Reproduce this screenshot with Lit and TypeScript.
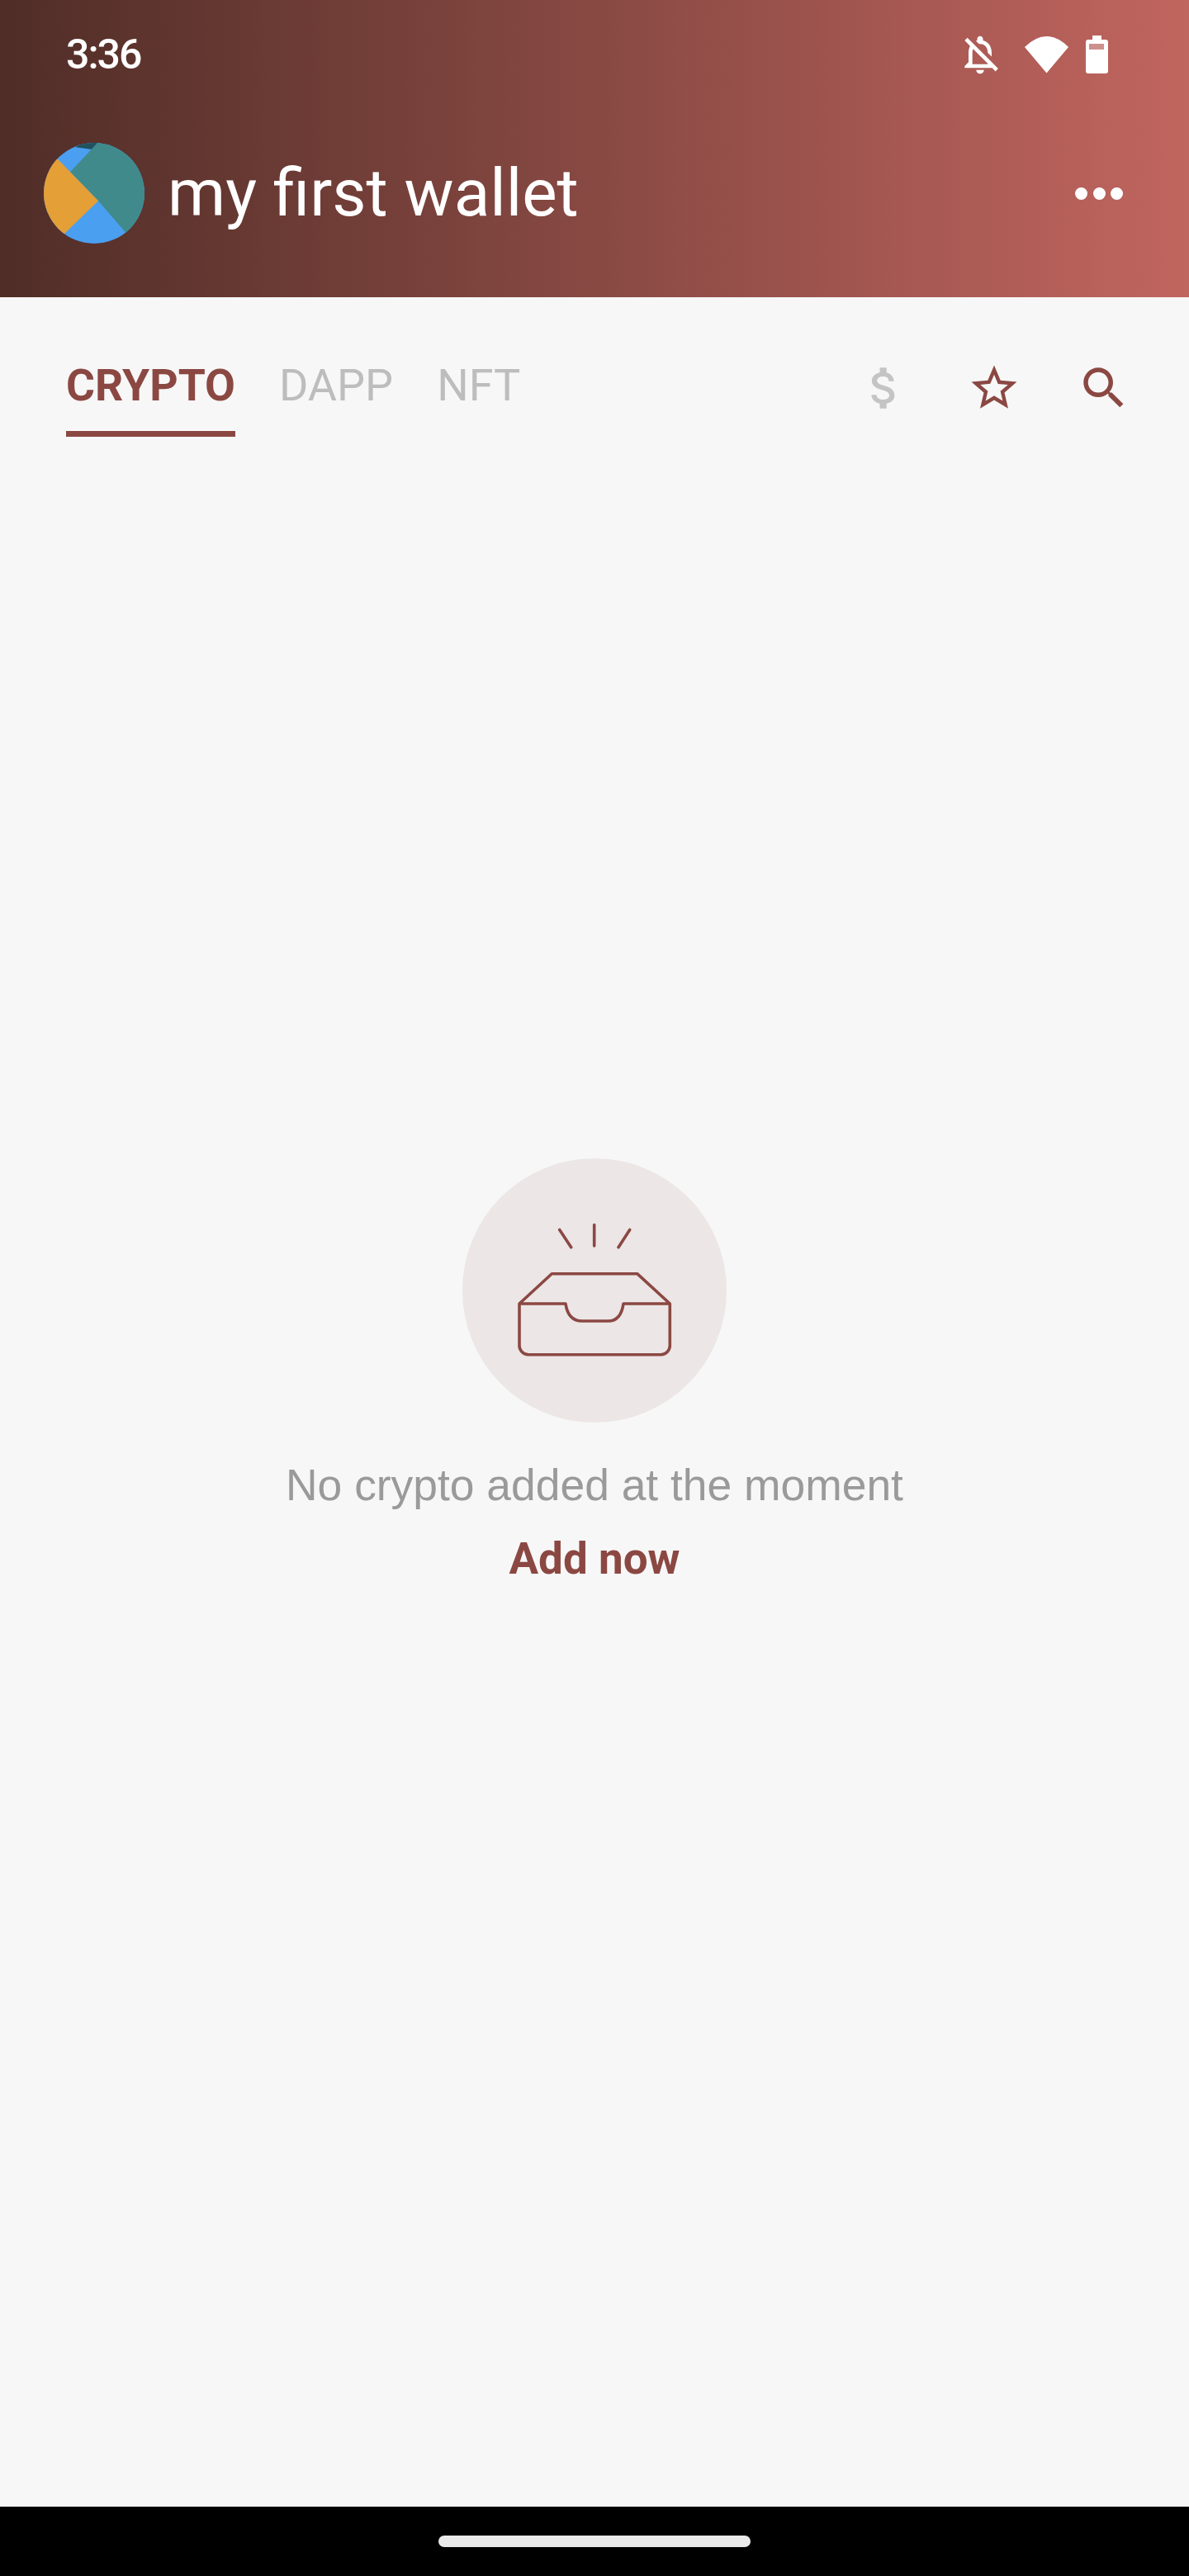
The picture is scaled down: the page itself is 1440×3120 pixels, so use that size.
import {LitElement, html, css, svg} from 'lit';
import {customElement, state} from 'lit/decorators.js';

const BELL_OFF = 'M12 22c1.1 0 2-.9 2-2h-4c0 1.1.9 2 2 2zm0-15.5c2.49 0 4 2.02 4 4.5v.1l2 2V11c0-3.08-1.64-5.64-4.5-6.32V4c0-.83-.67-1.5-1.5-1.5s-1.5.67-1.5 1.5v.68c-.24.06-.47.15-.69.23l1.64 1.64c.18-.02.36-.05.55-.05zM5.41 3.35L4 4.76l2.81 2.81C6.29 8.57 6 9.74 6 11v5l-2 2v1h14.24l1.74 1.74 1.41-1.41L5.41 3.35zM16 17H8v-6c0-.68.12-1.32.34-1.9L16 16.76V17z';
const DOLLAR = 'M11.8 10.9c-2.27-.59-3-1.2-3-2.15 0-1.09 1.01-1.85 2.7-1.85 1.78 0 2.44.85 2.5 2.1h2.21c-.07-1.72-1.12-3.3-3.21-3.81V3h-3v2.16c-1.94.42-3.5 1.68-3.5 3.61 0 2.31 1.91 3.46 4.7 4.13 2.5.6 3 1.48 3 2.41 0 .69-.49 1.79-2.7 1.79-2.06 0-2.87-.92-2.98-2.1h-2.2c.12 2.19 1.76 3.42 3.68 3.83V21h3v-2.15c1.95-.37 3.5-1.5 3.5-3.55 0-2.84-2.43-3.81-4.7-4.4z';
const STAR = 'M22 9.24l-7.19-.62L12 2 9.19 8.63 2 9.24l5.46 4.73L5.82 21 12 17.27 18.18 21l-1.63-7.03L22 9.24zM12 15.4l-3.76 2.27 1-4.28-3.32-2.88 4.38-.38L12 6.1l1.71 4.04 4.38.38-3.32 2.88 1 4.28L12 15.4z';
const SEARCH = 'M15.5 14h-.79l-.28-.27C15.41 12.59 16 11.11 16 9.5 16 5.91 13.09 3 9.5 3S3 5.91 3 9.5 5.91 16 9.5 16c1.61 0 3.09-.59 4.23-1.57l.27.28v.79l5 4.99L20.49 19l-4.99-5zm-6 0C7.01 14 5 11.99 5 9.5S7.01 5 9.5 5 14 7.01 14 9.5 11.99 14 9.5 14z';

const icon = (d: string, cls: string) => html`
  <svg class=${cls} viewBox="0 0 24 24" fill="currentColor">${svg`<path d=${d}></path>`}</svg>
`;

@customElement('app-root')
export class AppRoot extends LitElement {
  @state() private tabs = ['CRYPTO', 'DAPP', 'NFT'];
  @state() private activeTab = 0;

  static styles = css`
    :host {
      display: flex;
      flex-direction: column;
      width: 1440px;
      height: 3120px;
      overflow: hidden;
      background: #f7f7f7;
      font-family: Roboto, sans-serif;
    }

    .header {
      height: 360px;
      flex: none;
      color: #fff;
      background: linear-gradient(to right, #502d27, #c1655f);
    }

    .status {
      display: flex;
      align-items: center;
      height: 56px;
      padding: 38px 98px 0 80px;
    }

    .time {
      font-size: 50px;
      font-weight: 500;
      letter-spacing: -2px;
      line-height: 56px;
    }

    .status-icons {
      display: flex;
      align-items: center;
      margin-left: auto;
    }

    .bell {
      width: 56px;
      height: 56px;
    }

    .wifi {
      width: 53px;
      height: 45px;
      margin-left: 26px;
    }

    .battery {
      width: 27px;
      height: 46px;
      margin-left: 21px;
    }

    .title-row {
      display: flex;
      align-items: center;
      margin-top: 79px;
      padding: 0 80px 0 53px;
    }

    .logo {
      width: 122px;
      height: 122px;
      flex: none;
    }

    .wallet-name {
      margin-left: 28px;
      font-size: 80px;
      line-height: 92px;
      font-weight: 400;
    }

    .more {
      display: flex;
      gap: 6.5px;
      margin-left: auto;
    }

    .more span {
      width: 15px;
      height: 15px;
      border-radius: 50%;
      background: #fff;
    }

    .tabs-row {
      display: flex;
      align-items: flex-start;
      padding: 77px 70px 0 80px;
    }

    .tabs {
      display: flex;
      gap: 53px;
    }

    .tab {
      font-size: 54px;
      line-height: 60px;
      font-weight: 400;
      color: #bdbdbd;
      padding-bottom: 25px;
      border-bottom: 7px solid transparent;
    }

    .tab.active {
      font-size: 53.5px;
      font-weight: 700;
      color: #8b4843;
      border-bottom-color: #8b4843;
    }

    .tools {
      display: flex;
      gap: 67px;
      margin-left: auto;
    }

    .tool {
      width: 66px;
      height: 66px;
      color: #8b4843;
    }

    .tool.muted {
      color: #c4c4c4;
    }

    .empty {
      display: flex;
      flex-direction: column;
      align-items: center;
      margin-top: 874px;
    }

    .tray {
      width: 320px;
      height: 320px;
      border-radius: 50%;
      background: #ece6e6;
    }

    .tray svg {
      display: block;
      fill: none;
      stroke: #8b4843;
      stroke-width: 3.6;
      stroke-linecap: round;
      stroke-linejoin: round;
    }

    .message {
      margin-top: 45px;
      font-family: 'Liberation Sans', Arial, sans-serif;
      font-size: 53.4px;
      line-height: 62px;
      color: #9a9a9a;
    }

    .add {
      margin-top: 28px;
      font-size: 53px;
      line-height: 60px;
      font-weight: 700;
      color: #8b4843;
    }

    .nav {
      display: flex;
      align-items: center;
      justify-content: center;
      height: 84px;
      margin-top: auto;
      background: #000;
    }

    .nav span {
      width: 378px;
      height: 14px;
      border-radius: 7px;
      background: #eaeaea;
    }
  `;

  private renderLogo() {
    return html`
      <svg class="logo" viewBox="0 0 122 122">
        <defs>
          <clipPath id="logo-clip"><circle cx="61" cy="61" r="61"></circle></clipPath>
        </defs>
        <g clip-path="url(#logo-clip)">
          <rect width="122" height="122" fill="#4a9ff0"></rect>
          <polygon points="38.7,5.3 50,-4 66,-4 64.3,1 58,8" fill="#20535f"></polygon>
          <polygon points="64.3,1 70,-6 130,-6 130,130 112,122 99.3,108.7 66,70.3 32,35.3" fill="#408a8c"></polygon>
          <polygon points="17,19.7 66,70.3 24.7,110.3 -6,110 -6,20" fill="#e59f37"></polygon>
        </g>
      </svg>
    `;
  }

  render() {
    return html`
      <div class="header">
        <div class="status">
          <span class="time">3:36</span>
          <div class="status-icons">
            ${icon(BELL_OFF, 'bell')}
            <svg class="wifi" viewBox="0 0 53 45" fill="#fff">
              <path d="M0 13Q26.5 -13 53 13L26.5 44.5Z"></path>
            </svg>
            <svg class="battery" viewBox="0 0 27 46" fill="#fff">
              <path fill-rule="evenodd" d="M8 0H19V5H24Q27 5 27 8V43Q27 46 24 46H3Q0 46 0 43V8Q0 5 3 5H8ZM4 10V17H22V10Z"></path>
              <rect x="4" y="10" width="18" height="7" opacity="0.3"></rect>
            </svg>
          </div>
        </div>
        <div class="title-row">
          ${this.renderLogo()}
          <span class="wallet-name">my first wallet</span>
          <div class="more"><span></span><span></span><span></span></div>
        </div>
      </div>

      <div class="tabs-row">
        <div class="tabs">
          ${this.tabs.map((t, i) => html`
            <div class="tab ${i === this.activeTab ? 'active' : ''}">${t}</div>
          `)}
        </div>
        <div class="tools">
          ${icon(DOLLAR, 'tool muted')}
          ${icon(STAR, 'tool')}
          ${icon(SEARCH, 'tool')}
        </div>
      </div>

      <div class="empty">
        <div class="tray">
          <svg width="320" height="320" viewBox="0 0 320 320">
            <path d="M159.7 80.5V106M117.7 86.5L131.7 107.7M202.7 86.5L189 107.7"></path>
            <path d="M69 176L108.3 139.7H211.7L251.3 176V226a11 11 0 0 1-11 11.7H80a11 11 0 0 1-11-11.7ZM69 176H125C127 190 134 197 145 197H176.7C187 197 193 190 195 176H251.3"></path>
          </svg>
        </div>
        <div class="message">No crypto added at the moment</div>
        <div class="add">Add now</div>
      </div>

      <div class="nav"><span></span></div>
    `;
  }
}
